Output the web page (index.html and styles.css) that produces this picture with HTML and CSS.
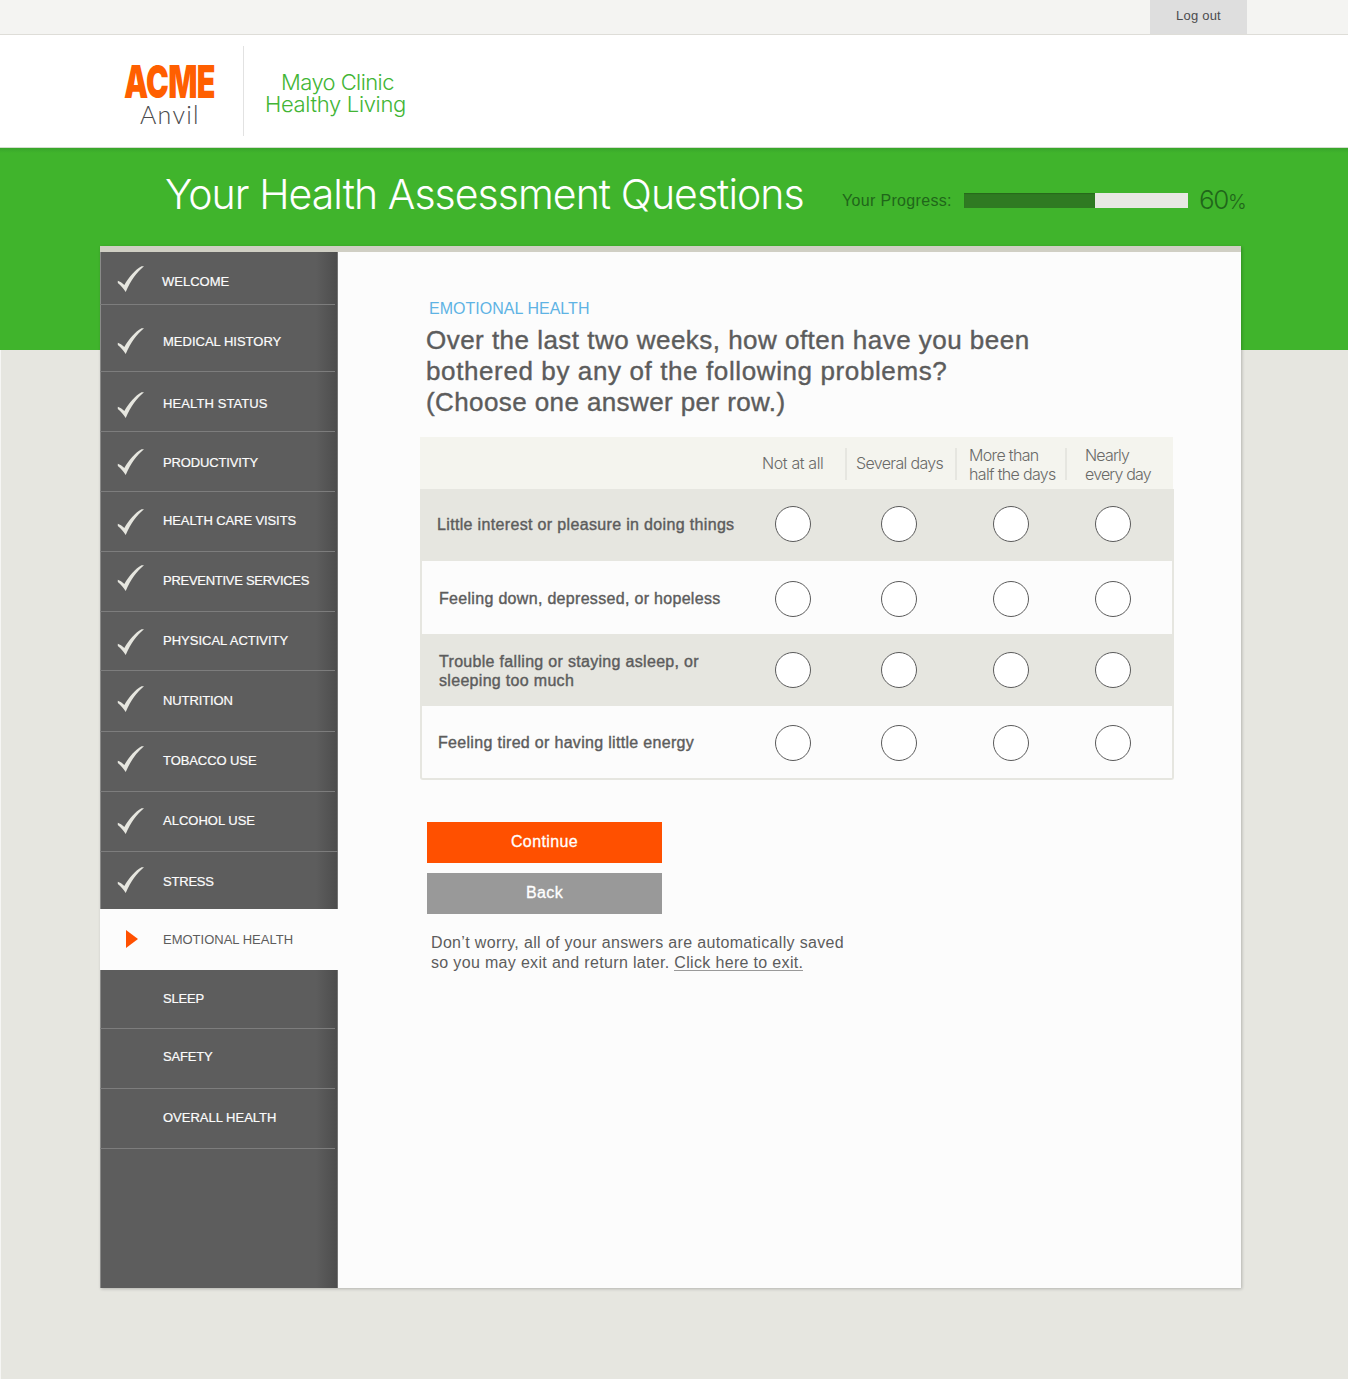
FILE: index.html
```html
<!DOCTYPE html>
<html lang="en">
<head>
<meta charset="utf-8">
<title>Your Health Assessment Questions</title>
<link rel="stylesheet" href="styles.css">
</head>
<body>
<svg width="0" height="0" class="defs" aria-hidden="true">
  <symbol id="check" viewBox="0 0 27 27"><path d="M.8 14.800C3 15.500 5 16.800 7.300 19C12 11 18 4 24.500 .3L27 .2C19.500 6.500 14 14 8.700 26C6.500 22.500 4 19.500 .8 17Z"/></symbol>
</svg>
<div class="topbar"><a class="logout">Log out</a></div>
<header class="brand">
  <div class="logo"><span class="logo-acme">ACME</span><span class="logo-anvil">Anvil</span></div>
  <div class="partner"><span class="partner-top">Mayo Clinic</span><span class="partner-bottom">Healthy Living</span></div>
</header>
<section class="hero">
  <h1 class="title">Your Health Assessment Questions</h1>
  <span class="progress-label">Your Progress:</span>
  <div class="progress"><div class="progress-fill" style="width:58.300%"></div></div>
  <span class="percent">60<small class="percent-sign">%</small></span>
</section>
<div class="card">
  <nav class="steps">
    <a class="step"><svg class="check"><use href="#check"/></svg><span class="step-name">WELCOME</span></a>
    <a class="step"><svg class="check"><use href="#check"/></svg><span class="step-name">MEDICAL HISTORY</span></a>
    <a class="step"><svg class="check"><use href="#check"/></svg><span class="step-name">HEALTH STATUS</span></a>
    <a class="step"><svg class="check"><use href="#check"/></svg><span class="step-name">PRODUCTIVITY</span></a>
    <a class="step"><svg class="check"><use href="#check"/></svg><span class="step-name">HEALTH CARE VISITS</span></a>
    <a class="step"><svg class="check"><use href="#check"/></svg><span class="step-name">PREVENTIVE SERVICES</span></a>
    <a class="step"><svg class="check"><use href="#check"/></svg><span class="step-name">PHYSICAL ACTIVITY</span></a>
    <a class="step"><svg class="check"><use href="#check"/></svg><span class="step-name">NUTRITION</span></a>
    <a class="step"><svg class="check"><use href="#check"/></svg><span class="step-name">TOBACCO USE</span></a>
    <a class="step"><svg class="check"><use href="#check"/></svg><span class="step-name">ALCOHOL USE</span></a>
    <a class="step"><svg class="check"><use href="#check"/></svg><span class="step-name">STRESS</span></a>
    <a class="step active"><svg class="arrow" viewBox="0 0 12 18"><path d="M0 0L12 9L0 18Z"/></svg><span class="step-name">EMOTIONAL HEALTH</span></a>
    <a class="step"><span class="step-name">SLEEP</span></a>
    <a class="step"><span class="step-name">SAFETY</span></a>
    <a class="step"><span class="step-name">OVERALL HEALTH</span></a>
  </nav>
  <main class="content">
    <p class="topic">EMOTIONAL HEALTH</p>
    <h2 class="question">Over the last two weeks, how often have you been<br><span class="looser">bothered by any of the following problems?</span><br><span class="tighter">(Choose one answer per row.)</span></h2>
    <div class="matrix">
      <div class="head">
        <span class="col">Not at all</span><span class="col">Several days</span><span class="col">More than<br>half the days</span><span class="col">Nearly<br>every day</span>
      </div>
      <div class="row shaded row-1"><span class="label">Little interest or pleasure in doing things</span><i class="radio"></i><i class="radio"></i><i class="radio"></i><i class="radio"></i></div>
      <div class="row row-2"><span class="label">Feeling down, depressed, or hopeless</span><i class="radio"></i><i class="radio"></i><i class="radio"></i><i class="radio"></i></div>
      <div class="row shaded row-3"><span class="label">Trouble falling or staying asleep, or<br>sleeping too much</span><i class="radio"></i><i class="radio"></i><i class="radio"></i><i class="radio"></i></div>
      <div class="row row-4"><span class="label">Feeling tired or having little energy</span><i class="radio"></i><i class="radio"></i><i class="radio"></i><i class="radio"></i></div>
    </div>
    <div class="actions">
      <button class="btn btn-continue">Continue</button>
      <button class="btn btn-back">Back</button>
    </div>
    <p class="note">Don’t worry, all of your answers are automatically saved<br>so you may exit and return later. <a class="exit">Click here to exit.</a></p>
  </main>
</div>
</body>
</html>
```
FILE: styles.css
```css
* { box-sizing: border-box; }
body {
  margin: 0;
  height: 1379px;
  background: linear-gradient(to right, #f6f6f4 1px, #e6e6e0 1px);
  font-family: "Liberation Sans", Arial, sans-serif;
  color: #5c5c5c;
}
p, h1, h2 { margin: 0; font-weight: 400; }
.defs { display: block; height: 0; }

.topbar {
  display: flex;
  justify-content: flex-end;
  height: 35px;
  padding-right: 101px;
  background: #f4f4f2;
  border-bottom: 1px solid #deddd8;
}
.logout {
  width: 97px;
  height: 34px;
  background: #dedede;
  color: #4c4c4e;
  font-size: 13px;
  line-height: 31px;
  text-align: center;
  letter-spacing: .2px;
}

.brand {
  display: flex;
  height: 113px;
  padding: 11px 0 0 100px;
  background: #fff;
  border-bottom: 1px solid #d5dccf;
}
.logo {
  display: flex;
  flex-direction: column;
  width: 144px;
  height: 90px;
  padding: 15px 0 0 24px;
  border-right: 1px solid #e2e2e2;
}
.logo-acme {
  width: max-content;
  height: 39px;
  font: 900 46px/41px Inter, sans-serif;
  letter-spacing: -1px;
  color: #ff5f00;
  transform: scaleX(.664);
  transform-origin: left;
}
.logo-anvil {
  padding-left: 16px;
  font: 300 25px/28px Lato, sans-serif;
  letter-spacing: 1.300px;
  color: #4a4a4c;
}
.partner {
  display: flex;
  flex-direction: column;
  padding: 25px 0 0 21px;
  font: 300 22px/22px Inter, sans-serif;
  color: #42b535;
}
.partner-top { padding-left: 16px; letter-spacing: -.58px; }
.partner-bottom { letter-spacing: -.33px; }

.hero {
  display: flex;
  height: 202px;
  padding: 20px 0 0 165px;
  background: linear-gradient(#38a52b, #40b42c 5px);
}
.title {
  width: 677px;
  font: 300 41px/53px Inter, sans-serif;
  letter-spacing: -.95px;
  color: #fff;
  white-space: nowrap;
}
.progress-label {
  width: 122px;
  font-size: 16px;
  line-height: 65px;
  letter-spacing: .33px;
  color: #20661a;
}
.progress {
  width: 224px;
  height: 15px;
  margin-top: 25px;
  background: #e8e8e3;
}
.progress-fill { height: 100%; background: #2f7a22; box-shadow: inset 0 1px 1px #27691b; }
.percent {
  margin-left: 11px;
  font: 300 26px/64px Inter, sans-serif;
  letter-spacing: -1.400px;
  color: #20661a;
}
.percent-sign { font-size: 20px; }

.card {
  display: flex;
  position: relative;
  width: 1141px;
  height: 1042px;
  margin: -104px 0 0 100px;
  background: #fcfcfc;
  border-top: 6px solid #d0cfc4;
  box-shadow: 1px 1px 3px rgba(0, 0, 0, .22);
}
.steps {
  width: 238px;
  background: linear-gradient(to right, #8a8a89 1px, #5d5d5d 1px, #5d5d5d 216px, #4d4d4d 237px, #747474 237px);
}
.step {
  --h: 60px;
  --t: 30px;
  --c: 17px;
  --x: 63px;
  --w: 235px;
  display: flex;
  align-items: flex-start;
  justify-content: space-between;
  width: var(--w);
  height: var(--h);
  border-bottom: 1px solid #7d7d7d;
  color: #fcfcfc;
  font-size: 13px;
  -webkit-text-stroke: .2px;
}
.step-name {
  margin: calc(var(--t) - 10px) 0 0 auto;
  width: calc(var(--w) - var(--x));
  line-height: 20px;
  white-space: nowrap;
}
.check { width: 27px; height: 27px; margin: var(--c) 0 0 17px; fill: #e6e6df; }
.step:nth-child(1) { --h: 53px; --c: 14px; --x: 62px; }
.step:nth-child(2) { --h: 67px; --t: 37px; --c: 23px; }
.step:nth-child(3) { --t: 32px; --c: 20px; letter-spacing: .1px; }
.step:nth-child(4) { --t: 31px; letter-spacing: -.15px; }
.step:nth-child(5) { --t: 29px; letter-spacing: -.1px; }
.step:nth-child(6) { --t: 29px; --c: 13px; letter-spacing: -.28px; }
.step:nth-child(7) { --h: 59px; --t: 29px; }
.step:nth-child(8) { --h: 61px; --c: 15px; letter-spacing: -.1px; }
.step:nth-child(9) { --t: 29px; --c: 14px; letter-spacing: -.08px; }
.step:nth-child(10) { --t: 29px; --c: 16px; --w: 238px; }
.step:nth-child(11) { --h: 57px; --c: 15px; border: 0; letter-spacing: -.2px; }
.step:nth-child(12) { --h: 61px; --t: 31px; }
.step:nth-child(13) { --h: 59px; --t: 29px; letter-spacing: -.2px; }
.step:nth-child(14) { --t: 28px; letter-spacing: -.2px; }
.step:nth-child(15) { --t: 29px; }
.step.active { --w: 238px; border: 0; background: #fcfcfc; color: #5c5c5c; -webkit-text-stroke: 0; }
.arrow { width: 12px; height: 18px; margin: 21px 0 0 26px; fill: #ff5000; }

.content { padding: 47px 0 0 82px; }
.topic { padding-left: 9px; font-size: 16px; line-height: 20px; letter-spacing: .03px; color: #5eb3e4; }
.question {
  padding: 6px 0 0 6px;
  font-size: 26px;
  line-height: 31px;
  letter-spacing: .47px;
  white-space: nowrap;
  -webkit-text-stroke: .4px;
}
.looser { letter-spacing: .61px; }
.tighter { letter-spacing: .4px; }
.matrix {
  width: 754px;
  margin-top: 19px;
}
.head {
  display: grid;
  grid-template-columns: 92px 110px 110px 90px;
  align-items: center;
  width: 753px;
  height: 52px;
  padding: 2px 0 0 333px;
  background: #f4f4ee;
  font: 300 16px/19px Inter, sans-serif;
  letter-spacing: -.66px;
  color: #6a6a68;
  white-space: nowrap;
}
.col { display: flex; align-items: center; height: 32px; padding-left: 9px; }
.col + .col { border-left: 2px solid #e6e6e0; }
.col:nth-child(1) { letter-spacing: -.38px; }
.col:nth-child(-n+2) { padding-bottom: 2px; }
.col:nth-child(3) { padding-left: 12px; }
.col:nth-child(n+3) { padding-top: 1px; }
.col:nth-child(4) { padding-left: 18px; letter-spacing: -.83px; }
.row {
  display: grid;
  grid-template-columns: 353px 106px 112px 102px 36px;
  height: 73px;
  border: solid #e6e6e0;
  border-width: 0 2px;
  font-size: 16px;
  line-height: 19px;
  letter-spacing: .31px;
}
.shaded { background: #e6e6e0; }
.label { align-self: center; padding-left: 17px; -webkit-text-stroke: .4px; }
.radio {
  width: 36px;
  height: 36px;
  margin-top: 17px;
  border: 1px solid #5b5b5b;
  border-radius: 50%;
  background: #fff;
}
.row-1, .row-3 { height: 72px; }
.row-1 .label { padding: 0 0 1px 15px; letter-spacing: .34px; }
.row-2 .label, .row-3 .label { padding-top: 2px; }
.row-2 .radio { margin-top: 20px; }
.row-3 .radio { margin-top: 18px; }
.row-4 { height: 74px; border-bottom-width: 2px; border-radius: 0 0 3px 3px; }
.row-4 .radio { margin-top: 19px; }
.row-4 .label { padding-left: 16px; }

.actions { display: grid; gap: 10px; width: 242px; padding: 42px 0 0 7px; }
.btn {
  height: 41px;
  padding: 0 0 1px;
  border: 0;
  color: #fff;
  font: 16px "Liberation Sans", Arial, sans-serif;
  letter-spacing: .4px;
  -webkit-text-stroke: .3px;
}
.btn-continue { background: #ff5000; }
.btn-back { background: #999; }
.note { padding: 19px 0 0 11px; font-size: 16px; line-height: 20px; letter-spacing: .33px; white-space: nowrap; }
.exit { display: inline-block; height: 18px; line-height: 20px; border-bottom: 1px solid #999; }
```
